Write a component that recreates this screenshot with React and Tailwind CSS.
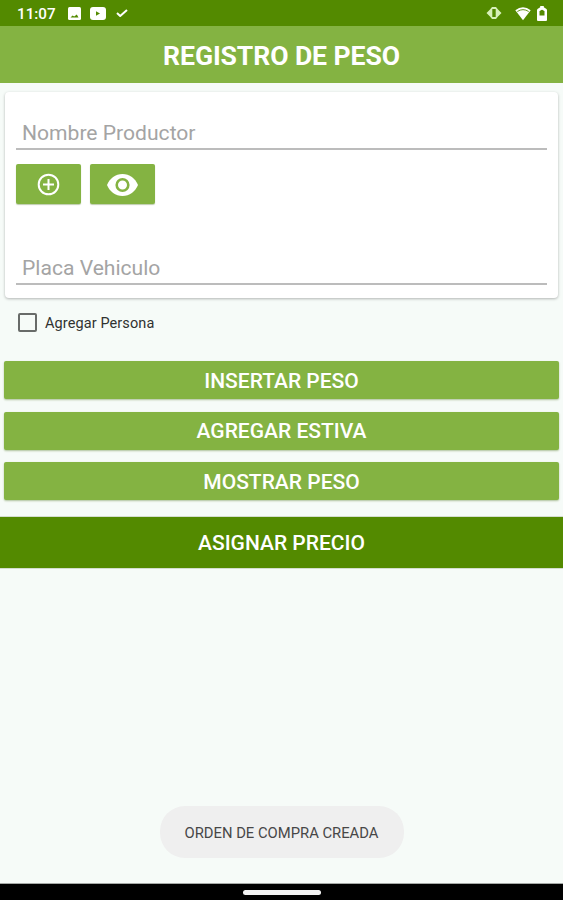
import { useState } from 'react'

const actions = ['INSERTAR PESO', 'AGREGAR ESTIVA', 'MOSTRAR PESO']

const StatusBar = () => (
  <div className="flex h-[26px] shrink-0 items-center justify-between bg-[#538a00] pl-[17px] pr-[16px] text-white">
    <div className="flex items-center">
      <span className="w-[51px] pt-[3px] text-[15.2px] leading-none font-medium">11:07</span>
      {/* Image */}
      <svg className="mt-px h-[13px] w-[13px]" viewBox="0 0 13 13" fill="none">
        <rect width="13" height="13" rx="1.5" fill="#fff" />
        <path d="M2.5 10.5 4.6 8.4l1.6 1.2L8.8 7.4l1.7 3.1z" fill="#538a00" />
      </svg>
      {/* Video */}
      <svg className="mt-px ml-[9px] h-[13px] w-4" viewBox="0 0 16 13" fill="none">
        <rect width="16" height="13" rx="3" fill="#fff" />
        <path d="M6 4.300v4.400l4-2.200z" fill="#538a00" />
      </svg>
      {/* Check */}
      <svg className="ml-[10px] h-2 w-3" viewBox="0 0 12 8" fill="none">
        <path d="M1 4 4.2 7 11 1" stroke="#fff" strokeWidth="2" />
      </svg>
    </div>
    <div className="flex items-center">
      {/* Vibrate */}
      <svg className="h-3 w-4" viewBox="0 0 16 12" fill="none">
        <path d="M6 0h4l2 2.500L15.500 6 12 9.500 10 12H6L4 9.500.5 6 4 2.500z" fill="#d8f0b8" />
        <rect x="6.300" y="2" width="3.400" height="8" fill="#538a00" />
      </svg>
      {/* Wifi */}
      <svg className="ml-[13px] h-[15px] w-4" viewBox="0 0 16 15" fill="none">
        <path d="M.3 4.200Q8-1.500 15.700 4.200L8 14.300z" fill="#fff" />
        <path d="M2.300 5.500Q8 1.800 13.700 5.500" stroke="#538a00" strokeWidth="0.900" />
      </svg>
      {/* Battery */}
      <svg className="ml-[6px] h-[15px] w-[10px]" viewBox="0 0 10 15" fill="none">
        <path d="M3.200 0h3.600v1.300L9.500 3 10 4v10a1 1 0 0 1-1 1H1a1 1 0 0 1-1-1V4l.5-1 2.700-1.700z" fill="#fff" />
        <path d="M2.500 9.500V5.500Q5 2 7.500 5.500v4z" fill="#538a00" />
      </svg>
    </div>
  </div>
)

const Field = ({ placeholder }) => (
  <input
    type="text"
    placeholder={placeholder}
    className="block h-[34px] w-full border-b-2 border-[#bcbcbc] bg-transparent px-[6px] pt-px text-[21.1px] leading-[31px] text-gray-700 outline-none placeholder:text-[#a4a4a4]"
  />
)

const IconButton = ({ label, children }) => (
  <button
    aria-label={label}
    className="flex h-10 w-[65px] items-center justify-center rounded-[2px] bg-[#84b342] pt-px shadow-[0_1px_1px_rgba(70,110,20,0.35)]"
  >
    {children}
  </button>
)

export default function App() {
  const [persona, setPersona] = useState(false)

  return (
    <div className="flex h-[900px] w-full flex-col overflow-hidden bg-[#f6fbf8] font-['Roboto',sans-serif]">
      <StatusBar />

      <header className="flex h-[57px] shrink-0 items-center justify-center bg-[#84b342] pt-[3px]">
        <h1 className="text-[26.6px] leading-none font-bold tracking-[-0.1px] text-white">REGISTRO DE PESO</h1>
      </header>

      <main className="flex flex-1 flex-col pt-[9px]">
        <section className="mx-[5px] h-[206px] rounded-[4px] bg-white px-[11px] pt-6 shadow-[0_1px_3px_rgba(0,0,0,0.28)]">
          <Field placeholder="Nombre Productor" />
          <div className="mt-[14px] flex gap-[9px]">
            <IconButton label="Agregar">
              <svg className="h-[23px] w-[23px]" viewBox="0 0 23 23" fill="none" stroke="#fff" strokeWidth="2">
                <circle cx="11.5" cy="11.5" r="9.8" />
                <path d="M11.5 6v11M6 11.5h11" />
              </svg>
            </IconButton>
            <IconButton label="Ver">
              <svg className="h-[22px] w-[31px]" viewBox="0 0 31 22" fill="none">
                <path d="M0 11C2.600 4.500 8.500 0 15.500 0S28.400 4.500 31 11C28.400 17.500 22.500 22 15.500 22S2.600 17.500 0 11z" fill="#fff" />
                <circle cx="15.5" cy="11" r="5.8" stroke="#84b342" strokeWidth="2.6" />
              </svg>
            </IconButton>
          </div>
          <div className="mt-[47px]">
            <Field placeholder="Placa Vehiculo" />
          </div>
        </section>

        <label className="mt-[14px] ml-[18px] flex h-5 items-center gap-2">
          <input
            type="checkbox"
            checked={persona}
            onChange={(e) => setPersona(e.target.checked)}
            className="h-[19px] w-[19px] appearance-none rounded-[2px] border-2 border-[#686b69] checked:bg-[#84b342]"
          />
          <span className="pt-[5px] text-[14.5px] leading-none tracking-[0.1px] text-[#303230]">Agregar Persona</span>
        </label>

        <div className="mt-[29px] flex flex-col gap-[12.5px] px-1">
          {actions.map((label) => (
            <button
              key={label}
              className="h-[38px] rounded-[2px] bg-[#84b342] pt-[2px] text-[21px] leading-none font-medium text-white shadow-[0_1px_2px_rgba(70,110,20,0.4)]"
            >
              {label}
            </button>
          ))}
        </div>

        <button className="mt-[17px] h-[51px] shrink-0 bg-[#538a00] pt-[2px] text-[21px] leading-none font-medium text-white shadow-[0_0_1px_#315300]">
          ASIGNAR PRECIO
        </button>

        {/* Toast */}
        <div className="mt-auto mb-[26px] flex h-[52px] w-[244px] items-center justify-center self-center rounded-[25px] bg-[#efefef] pt-[2px] text-[14.8px] text-[#474747]">
          ORDEN DE COMPRA CREADA
        </div>
      </main>

      <nav className="flex h-4 shrink-0 items-center justify-center bg-black shadow-[0_-1px_0_#a5a9a6]">
        <div className="mt-px h-[5px] w-[78px] rounded-full bg-[#f4f4f4]" />
      </nav>
    </div>
  )
}
